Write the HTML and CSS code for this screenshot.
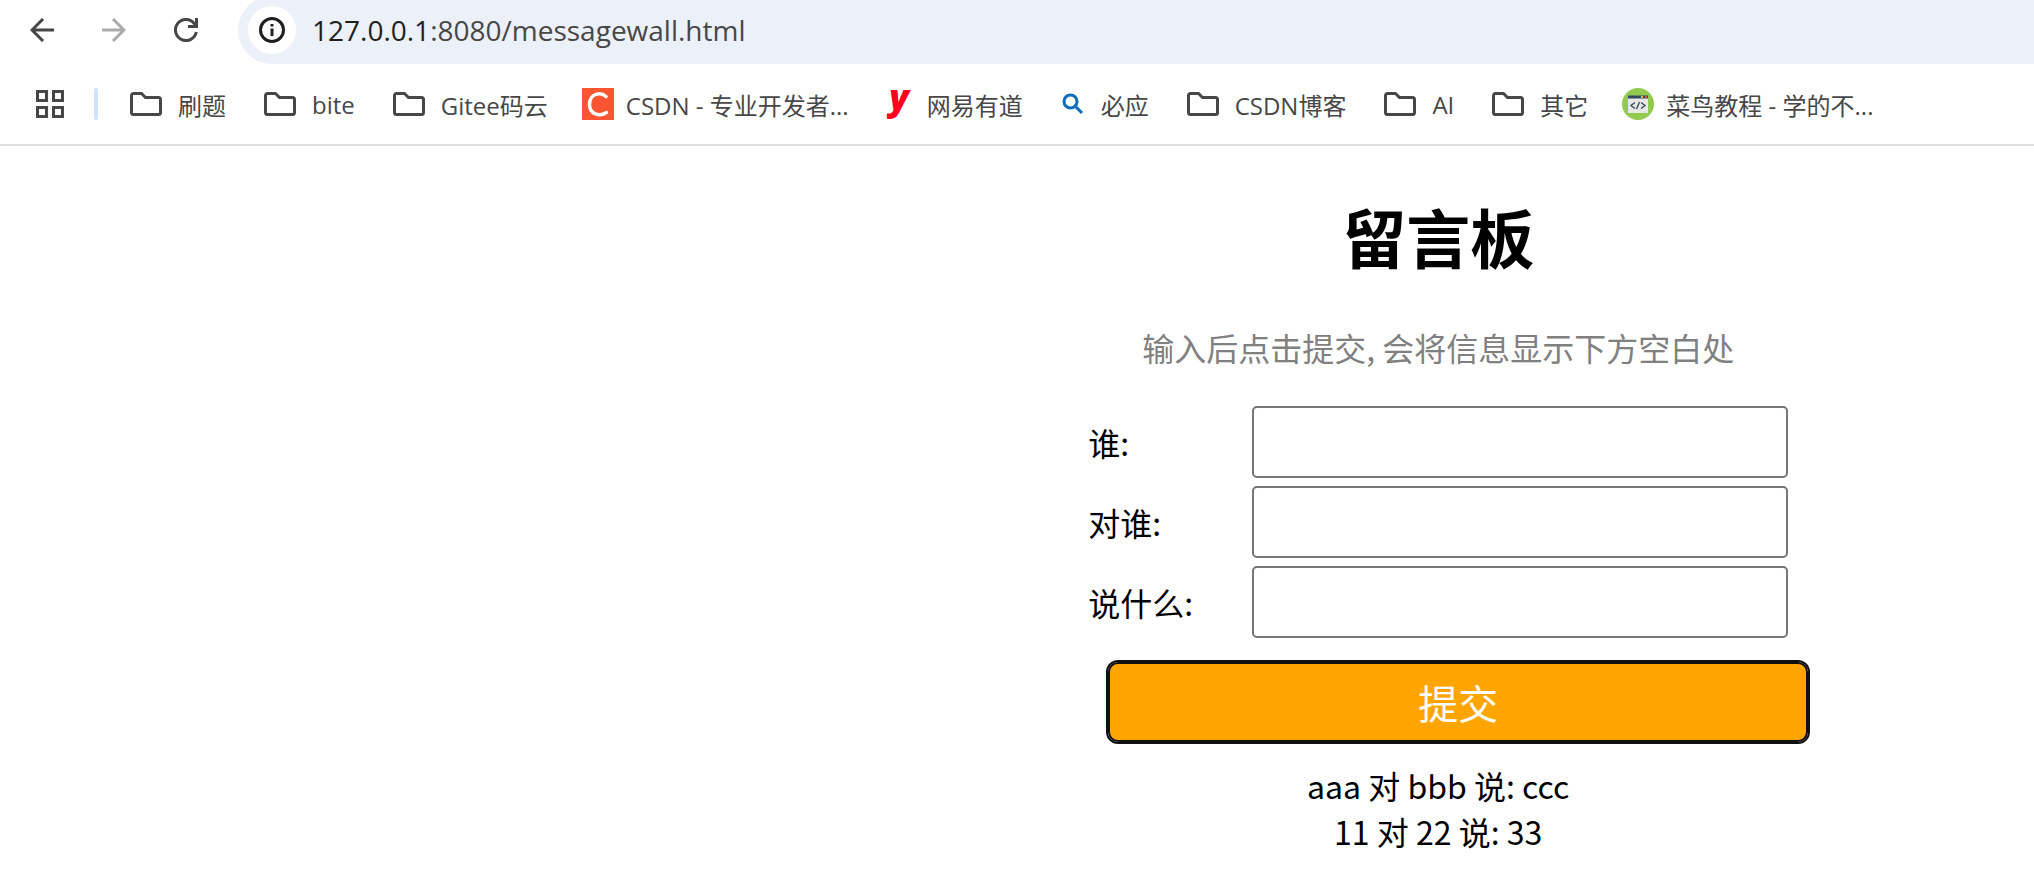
FILE: index.html
```html
<!DOCTYPE html>
<html lang="zh-CN">
<head>
    <meta charset="UTF-8">
    <meta name="viewport" content="width=device-width, initial-scale=1.0">
    <title>留言板</title>
    <link rel="stylesheet" href="styles.css">
</head>
<body>
    <svg class="sprite" aria-hidden="true">
        <symbol id="folder" viewBox="0 0 32 24">
            <path d="M3.5 1.5h8l4 4h13a2 2 0 0 1 2 2v13a2 2 0 0 1-2 2h-25a2 2 0 0 1-2-2v-17a2 2 0 0 1 2-2z" fill="none" stroke="#474747" stroke-width="3"/>
        </symbol>
    </svg>

    <header class="browser">
        <div class="toolbar">
            <button class="nav_btn" aria-label="后退">
                <svg width="24" height="24" viewBox="0 0 24 24"><path d="M24 12H2M13 1L2 12l11 11" fill="none" stroke="#474747" stroke-width="3"/></svg>
            </button>
            <button class="nav_btn" aria-label="前进">
                <svg width="24" height="24" viewBox="0 0 24 24"><path d="M0 12h22M11 1l11 11-11 11" fill="none" stroke="#ababab" stroke-width="3"/></svg>
            </button>
            <button class="nav_btn" aria-label="刷新">
                <svg width="24" height="24" viewBox="0 0 24 24"><path d="M22.3 14A10.5 10.5 0 1 1 20 5.2L22.5 8.5M22.5 0v8.5H14" fill="none" stroke="#474747" stroke-width="3"/></svg>
            </button>
            <div class="address">
                <button class="site_info" aria-label="网站信息">
                    <svg width="26" height="26" viewBox="0 0 26 26"><circle cx="13" cy="13" r="11.5" fill="none" stroke="#1f1f1f" stroke-width="3"/><path d="M11.5 7h3v2.5h-3zM11.500 11.5h3V19h-3z" fill="#1f1f1f"/></svg>
                </button>
                <span class="url"><b>127.0.0.1</b>:8080/messagewall.html</span>
            </div>
        </div>
        <nav class="bookmarks">
            <button class="apps" aria-label="应用">
                <svg width="28" height="28" viewBox="0 0 28 28"><path d="M1.5 1.5h9v9h-9zM17.5 1.5h9v9h-9zM1.5 17.5h9v9h-9zM17.5 17.5h9v9h-9z" fill="none" stroke="#474747" stroke-width="3"/></svg>
            </button>
            <span class="divider"></span>
            <a class="bookmark" href="#"><svg class="folder"><use href="#folder"/></svg>刷题</a>
            <a class="bookmark" href="#"><svg class="folder"><use href="#folder"/></svg>bite</a>
            <a class="bookmark" href="#"><svg class="folder"><use href="#folder"/></svg>Gitee码云</a>
            <a class="bookmark" href="#">
                <svg class="favicon" viewBox="0 0 32 32"><path d="M0 0h32v32H0z" fill="#fc5531"/><path d="M24 8.500C18 3 7.500 6 7.500 16.500c0 10 10 12.500 17 8" fill="none" stroke="#fff" stroke-width="3.500" stroke-linecap="round"/></svg>CSDN - 专业开发者...
            </a>
            <a class="bookmark" href="#">
                <svg class="favicon" viewBox="0 0 32 32"><text class="youdao_logo" x="16" y="22" text-anchor="middle">y</text></svg>网易有道
            </a>
            <a class="bookmark" href="#">
                <svg class="favicon" viewBox="0 0 32 32"><g fill="none" stroke="#0f6cbd" stroke-width="3"><circle cx="13.5" cy="13.5" r="6.5"/><path d="M18 18l7 7"/></g></svg>必应
            </a>
            <a class="bookmark" href="#"><svg class="folder"><use href="#folder"/></svg>CSDN博客</a>
            <a class="bookmark" href="#"><svg class="folder"><use href="#folder"/></svg>AI</a>
            <a class="bookmark" href="#"><svg class="folder"><use href="#folder"/></svg>其它</a>
            <a class="bookmark" href="#">
                <svg class="favicon" viewBox="0 0 32 32">
                    <circle cx="16" cy="16" r="16" fill="#92ca4f"/>
                    <path d="M6 8h20v17H6z" fill="#e8e8e4"/>
                    <path d="M6 7.500h20v3H6z" fill="#324a5e"/>
                    <path d="M19 8h2v2h-2z" fill="#f1b730"/>
                    <path d="M23 8h2v2h-2z" fill="#e0533d"/>
                    <path d="M13 14.500l-4 3 4 3M19 14.500l4 3-4 3M17.500 14l-3 7" fill="none" stroke="#324a5e" stroke-width="1.300"/>
                </svg>菜鸟教程 - 学的不...
            </a>
        </nav>
    </header>

    <main class="container">
        <h1>留言板</h1>
        <p class="tip">输入后点击提交, 会将信息显示下方空白处</p>
        <div class="row">
            <label for="from">谁:</label>
            <input type="text" id="from">
        </div>
        <div class="row">
            <label for="to">对谁:</label>
            <input type="text" id="to">
        </div>
        <div class="row">
            <label for="say">说什么:</label>
            <input type="text" id="say">
        </div>
        <button id="submit">提交</button>
        <div class="message">aaa 对 bbb 说: ccc</div>
        <div class="message">11 对 22 说: 33</div>
    </main>
</body>
</html>
```
FILE: styles.css
```css
* {
    box-sizing: border-box;
}
body {
    margin: 0;
    background-color: #fff;
}
.sprite {
    display: none;
}
button {
    font-family: inherit;
}

/* 浏览器顶部 */
.browser {
    border-bottom: 2px solid #e0e0e0;
    color: #474747;
    font-family: "Open Sans", "Noto Sans CJK SC", sans-serif;
}
.browser button {
    display: flex;
    justify-content: center;
    align-items: center;
    padding: 0;
    border: 0;
    background: none;
}
.toolbar {
    display: flex;
    align-items: center;
    height: 60px;
    padding-left: 6px;
}
.toolbar .nav_btn {
    width: 72px;
    height: 48px;
}
.address {
    flex: 1;
    display: flex;
    align-items: center;
    column-gap: 16px;
    height: 68px;
    margin-left: 16px;
    padding-left: 10px;
    border-radius: 34px 0 0 34px;
    background-color: #ecf0f9;
}
.address .site_info {
    width: 48px;
    height: 48px;
    border-radius: 50%;
    background-color: #fff;
}
.url {
    font-size: 28px;
    line-height: 40px;
}
.url b {
    color: #1f1f1f;
    font-weight: 400;
}
.bookmarks {
    display: flex;
    align-items: center;
    height: 84px;
    padding: 4px 36px 0;
    font-size: 24px;
}
.divider {
    width: 4px;
    height: 32px;
    margin: 0 28px 0 30px;
    border-radius: 2px;
    background-color: #d3e3fd;
}
.bookmark {
    display: flex;
    align-items: center;
    margin-right: 34px;
    color: #474747;
    text-decoration: none;
    white-space: nowrap;
}
.folder {
    width: 32px;
    height: 24px;
    margin: 0 16px 0 4px;
}
.favicon {
    width: 32px;
    height: 32px;
    margin-right: 12px;
    overflow: visible;
}
.youdao_logo {
    fill: #ff001f;
    font: italic 800 36px "Open Sans", sans-serif;
}

/* 留言板 */
.container {
    width: 700px;
    margin-left: 53.5%;
    font-family: "Noto Sans CJK SC", sans-serif;
    font-size: 32px;
    line-height: 46px;
}
h1 {
    margin: 43px 0;
    font-size: 64px;
    line-height: 92px;
    text-align: center;
}
.tip {
    margin: 0 0 32px;
    color: #808080;
    text-align: center;
}
.row {
    display: flex;
    justify-content: space-between;
    align-items: center;
    height: 80px;
}
.row input {
    width: 536px;
    height: 72px;
    padding: 2px 4px;
    border: 2px solid #767676;
    border-radius: 5px;
    font-size: 32px;
}
#submit {
    display: block;
    width: 700px;
    height: 80px;
    margin: 20px 0 20px 20px;
    border: 2px solid #101010;
    border-radius: 10px;
    outline: 2px solid #101010;
    background-color: orange;
    color: #fff;
    font-size: 40px;
}
.message {
    text-align: center;
}
```
